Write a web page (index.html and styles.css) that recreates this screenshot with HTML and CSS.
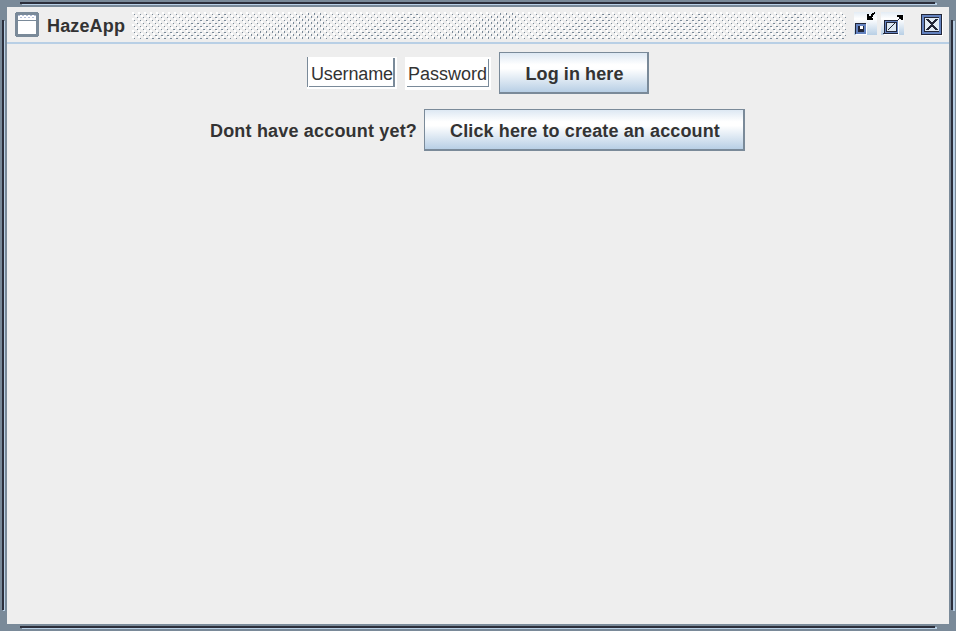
FILE: index.html
```
<!DOCTYPE html>
<html lang="en"><head><meta charset="utf-8"><title>HazeApp</title><link rel="stylesheet" href="styles.css"></head>
<body>
<div class="window">
<i class="edge top"></i><i class="edge bottom"></i><i class="edge left"></i><i class="edge right"></i>
<div class="pane">
<header class="titlebar">
<svg class="app-icon" width="24" height="25" viewBox="0 0 24 25" shape-rendering="crispEdges"><path fill="#7a8a99" d="M1 0h22v1h1v23h-1v1H1v-1H0V1h1z"/><path fill="#fff" d="M3 3h18v19H3z"/><path fill="#7a8a99" d="M3 8h18v1H3z"/><path stroke="#b4bfda" stroke-dasharray="2 2" d="M3 3.5h18M5 5.5h16"/></svg>
<h1>HazeApp</h1>
<svg class="bumps" width="714" height="27" shape-rendering="crispEdges"><defs>
<pattern id="b" width="6" height="6" patternUnits="userSpaceOnUse"><path fill="#fff" d="M0 0h2v2H0zM3 3h2v2H3z"/><path fill="#7a8a99" d="M2 2h1v1H2zM5 5h1v1H5z"/></pattern>
<pattern id="w" width="6" height="6" patternUnits="userSpaceOnUse"><path fill="#7a8a99" d="M2 2h2v1H2zM5 5h1v1H5zM0 5h1v1H0z"/></pattern>
<pattern id="t" width="6" height="6" patternUnits="userSpaceOnUse"><path fill="#7a8a99" d="M2 1h1v2H2zM5 4h1v2H5z"/></pattern></defs>
<rect width="714" height="27" fill="url(#b)"/>
<path fill="url(#w)" d="M12 27 90 0h6v27zM204 27 282 0h6v27zM396 27 474 0h6v27zM492 27 570 0h6v27zM588 27 666 0h6v27zM684 27 714 17v10z"/>
<path fill="url(#t)" d="M102 27 180 0h12v27zM294 27 372 0h12v27z"/></svg>
<div class="controls">
<svg width="23" height="25" viewBox="0 0 23 25" shape-rendering="crispEdges"><defs><linearGradient id="g" x2="0" y2="1"><stop stop-color="#e3ecf5"/><stop offset=".3" stop-color="#fff"/><stop offset="1" stop-color="#b8cfe5"/></linearGradient></defs><path fill="url(#g)" d="M0 1h23v23H0z"/><path fill="#222638" d="M1 12h11v11H1z"/><path fill="#6382bf" d="M2 13h10v10H2z"/><path fill="#222638" d="M4 15h6v6H4z"/><path fill="#fff" d="M6 15h3v3H6z"/><path fill="#fff" d="M12 13h1v11H2v-1h10z"/><path fill="#000" d="M13 3h2v4h4v2h-6zM15 5h3v2h-3zM17 3h2v3h-2zM18 2h2v2h-2zM20 1h1v2h-1z"/></svg>
<svg width="23" height="25" viewBox="0 0 23 25" shape-rendering="crispEdges"><path fill="url(#g)" d="M0 1h23v23H0z"/><path fill="#222638" d="M3 9h14v14H2v-1h1z"/><path fill="#6382bf" d="M4 10h13v12H4z"/><path fill="#222638" d="M5 11h11v10H5z"/><path fill="#dce8f3" d="M6 12h9v8H6z"/><path fill="#fff" d="M17 9h1v15H3v-1h14z"/><path fill="#000" d="M16 4h6v5h-2V6h-4zM18 6h2v2h-2z"/><path stroke="#222638" d="m7 19 7-7M17 9l2-2"/></svg>
<svg class="close" width="22" height="23" viewBox="0 0 22 23" shape-rendering="crispEdges"><path fill="#222638" d="M0 0h21v21H0z"/><path fill="#6382bf" d="M1 1h19v19H1z"/><path fill="#222638" d="M3 3h15v15H3z"/><path fill="#e2ecf6" d="M4 4h14v13H4z"/><path stroke="#222638" stroke-width="2" d="m6 5 10 11M16 5 6 16"/><path fill="#fff" d="M21 1h1v21H1v-1h20z"/></svg>
</div>
</header>
<main>
<div class="row"><input class="field user" value="Username" aria-label="Username"><input class="field pass" value="Password" aria-label="Password"><button class="login">Log in here</button></div>
<div class="row second"><label>Dont have account yet?</label><button class="create">Click here to create an account</button></div>
</main>
</div>
</div>
</body></html>
```
FILE: styles.css
```
* { box-sizing: border-box; }
body { margin: 0; background: #fff; font-family: "Liberation Sans", Arial, sans-serif; color: #333; overflow: hidden; }
.window { position: relative; width: 956px; height: 631px; padding: 7px; background: #7a8a99; }
.pane { width: 942px; height: 617px; background: #eee; }
.edge { position: absolute; background: #2b2e3b; }
.top, .bottom { left: 20px; width: 915px; height: 2px; box-shadow: 2px 1px #b8cfe5; }
.top { top: 2px; }
.bottom { top: 626px; }
.left, .right { top: 20px; width: 2px; height: 590px; box-shadow: 1px 1px #b8cfe5; }
.left { left: 2px; }
.right { left: 951px; box-shadow: 2px 1px #b8cfe5; }
.titlebar { height: 37px; border-bottom: 2px solid #b8cfe5; display: flex; padding-left: 8px; }
.app-icon { margin-top: 5px; flex: none; }
h1 { font-size: 18px; line-height: 20px; letter-spacing: .15px; margin: 9px 0 0 8px; width: 77px; white-space: nowrap; }
.bumps { margin: 5px 0 0 8px; flex: none; }
.controls { display: flex; margin: 4px 0 0 8px; gap: 4px; }
.controls svg { flex: none; }
.controls .close { margin: 3px 0 0 13px; }
.row { display: flex; height: 42px; margin: 8px 0 0 300px; align-items: flex-start; }
.field { border: 0; border-radius: 0; font: 18px/20px "Liberation Sans", Arial, sans-serif; color: #333; outline: 0; height: 33px; margin-top: 5px; background-color: #fff; background-repeat: no-repeat; background-image: linear-gradient(#7a8a99, #7a8a99), linear-gradient(#7a8a99, #7a8a99), linear-gradient(#7a8a99, #7a8a99); }
.user { width: 90px; height: 32px; padding: 3px 0 0 4px; letter-spacing: -.13px; background-size: 1px 30px, 2px 29px, 86px 1px; background-position: 0 0, 86px 1px, 2px 29px; }
.pass { width: 86px; margin-left: 8px; padding: 1px 0 0 3px; background-size: 0 0, 1px 28px, 82px 1px; background-position: 0 0, 83px 2px, 2px 29px; }
button { height: 42px; padding: 3px 0 0 2px; border: 1px solid #7a8a99; border-width: 1px 2px 2px 1px; border-radius: 0; background: linear-gradient(#dde8f3, #fff 30%, #fff 40%, #b8cfe5); font: bold 18px "Liberation Sans", Arial, sans-serif; color: #333; }
.login { width: 150px; margin-left: 8px; letter-spacing: .1px; }
.create { width: 321px; margin-left: 7px; letter-spacing: .12px; }
.second { margin: 15px 0 0 203px; }
label { font-weight: bold; font-size: 18px; line-height: 20px; letter-spacing: .18px; margin-top: 12px; width: 207px; white-space: nowrap; }
```
